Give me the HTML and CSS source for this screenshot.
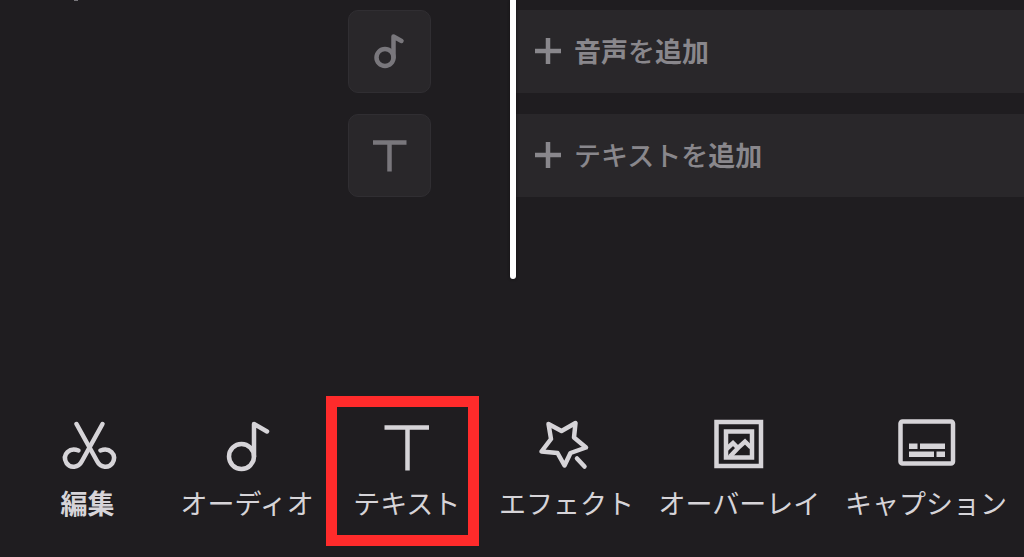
FILE: index.html
```html
<!DOCTYPE html>
<html lang="ja">
<head>
    <meta charset="UTF-8">
    <meta name="viewport" content="width=device-width, initial-scale=1.0">
    <title>動画編集</title>
    <link rel="stylesheet" href="styles.css">
</head>
<body>
    <main class="timeline">
        <span class="clipEdge"></span>
        <div class="track">
            <div class="trackHead">
                <button class="trackIcon" type="button" aria-label="音声">
                    <svg width="81" height="81" viewBox="1 1 81 81">
                        <circle cx="37" cy="47.5" r="8.5"/>
                        <path d="M45.5 47.5V26.5L53.5 31" stroke-linecap="round" stroke-linejoin="round"/>
                    </svg>
                </button>
            </div>
            <button class="lane" type="button">
                <svg width="28" height="28" viewBox="0 0 28 28"><path d="M1 14H27M14 1V27"/></svg>
                <span><b>音声</b>を<b>追加</b></span>
            </button>
        </div>
        <div class="track">
            <div class="trackHead">
                <button class="trackIcon" type="button" aria-label="テキスト">
                    <svg width="81" height="81" viewBox="1 1 81 81">
                        <path d="M25 28.5H58.5M41.5 28.5V57.5"/>
                    </svg>
                </button>
            </div>
            <button class="lane" type="button">
                <svg width="28" height="28" viewBox="0 0 28 28"><path d="M1 14H27M14 1V27"/></svg>
                <span>テキストを<b>追加</b></span>
            </button>
        </div>
        <div class="playhead"></div>
    </main>

    <nav class="toolbar">
        <button class="tool" type="button">
            <svg width="60" height="60" viewBox="0 0 60 60" stroke-linecap="round">
                <path d="M44.5 9L24 46C20.500 53 12 53.500 8.500 48C3.500 39 12 32 20.500 35.500"/>
                <path d="M18.500 9L39 46C42.500 53 51 53.500 54.500 48C59.500 39 51 32 42.500 35.500"/>
            </svg>
            <b>編集</b>
        </button>
        <button class="tool" type="button">
            <svg width="60" height="60" viewBox="0 0 60 60" stroke-linecap="round" stroke-linejoin="round">
                <circle cx="24.5" cy="41.5" r="12.5"/>
                <path d="M37 41.5V9L50 16.5"/>
            </svg>
            オーディオ
        </button>
        <button class="tool selected" type="button">
            <svg width="60" height="60" viewBox="0 0 60 60">
                <path d="M7.5 12.5H52M30.5 12.5V55.5"/>
            </svg>
            テキスト
        </button>
        <button class="tool" type="button">
            <svg width="60" height="60" viewBox="0 0 60 60" stroke-linejoin="round" stroke-linecap="round">
                <path d="M12.5 9L25.5 16L39.5 8L38 22.5L50 32.5L34.5 38L28.5 50.5L21.5 38L5.5 36.5L15 24Z"/>
                <path d="M41 43.5L48.5 51.5"/>
            </svg>
            エフェクト
        </button>
        <button class="tool" type="button">
            <svg width="60" height="60" viewBox="0 0 60 60">
                <rect x="7.5" y="7" width="44.5" height="44"/>
                <rect x="17" y="16.5" width="26" height="26"/>
                <path d="M17.5 34L24 28L29 33L36 26.5L42 32.5M30 32L21 41.5"/>
            </svg>
            オーバーレイ
        </button>
        <button class="tool" type="button">
            <svg width="60" height="60" viewBox="0 0 60 60" stroke-linejoin="round">
                <rect x="4.5" y="6.5" width="52.5" height="42" rx="2"/>
                <path d="M13 31.2H21.5M24 31.2H49M13 39.3H38M40.5 39.3H49" stroke-width="5.500"/>
            </svg>
            キャプション
        </button>
    </nav>
</body>
</html>
```

FILE: styles.css
```css
* {
    box-sizing: border-box;
}

body {
    margin: 0;
    min-height: 100vh;
    display: flex;
    flex-direction: column;
    justify-content: space-between;
    background-color: #1f1d20;
    font-family: "Noto Sans CJK JP", sans-serif;
}

button {
    margin: 0;
    padding: 0;
    border: none;
    background: none;
    font-family: inherit;
    font-size: 27px;
    line-height: 36px;
    white-space: nowrap;
    cursor: pointer;
}

svg {
    display: block;
    flex-shrink: 0;
    fill: none;
    stroke: currentColor;
    stroke-width: 4.5;
}

.timeline {
    position: relative;
    display: flex;
    flex-direction: column;
    gap: 21px;
    padding-top: 10px;
    padding-bottom: 82px;
}

.track {
    display: grid;
    grid-template-columns: 1fr 1fr;
}

.trackHead {
    display: flex;
    justify-content: flex-end;
    padding-right: 81px;
}

.trackIcon {
    border: 1px solid #302e32;
    border-radius: 10px;
    background-color: #29272a;
    color: #79777c;
}

.lane {
    display: flex;
    align-items: center;
    gap: 12px;
    padding-left: 22px;
    padding-bottom: 1px;
    background-color: #29272a;
    color: #89878c;
    font-weight: 500;
}

/* bottom edge of the clip scrolled off above */
.clipEdge {
    position: absolute;
    top: 0;
    left: 74px;
    width: 4px;
    height: 1px;
    background-color: #77757a;
}

.playhead {
    position: absolute;
    top: 0;
    bottom: 0;
    left: 50%;
    width: 6px;
    margin-left: -2px;
    border-radius: 0 0 3px 3px;
    background-color: #fff;
    box-shadow: 0 0 3px #111012;
}

.toolbar {
    display: flex;
    justify-content: space-between;
    padding: 0 17px 36px 20px;
}

.tool {
    position: relative;
    display: flex;
    flex-direction: column;
    align-items: center;
    gap: 10px;
    min-width: 135px;
    color: #d6d4d8;
}

/* red frame round the current tool */
.selected::after {
    content: "";
    position: absolute;
    inset: -19px -5px -25px -13px;
    border: 11px solid #ff2b2b;
}
```
